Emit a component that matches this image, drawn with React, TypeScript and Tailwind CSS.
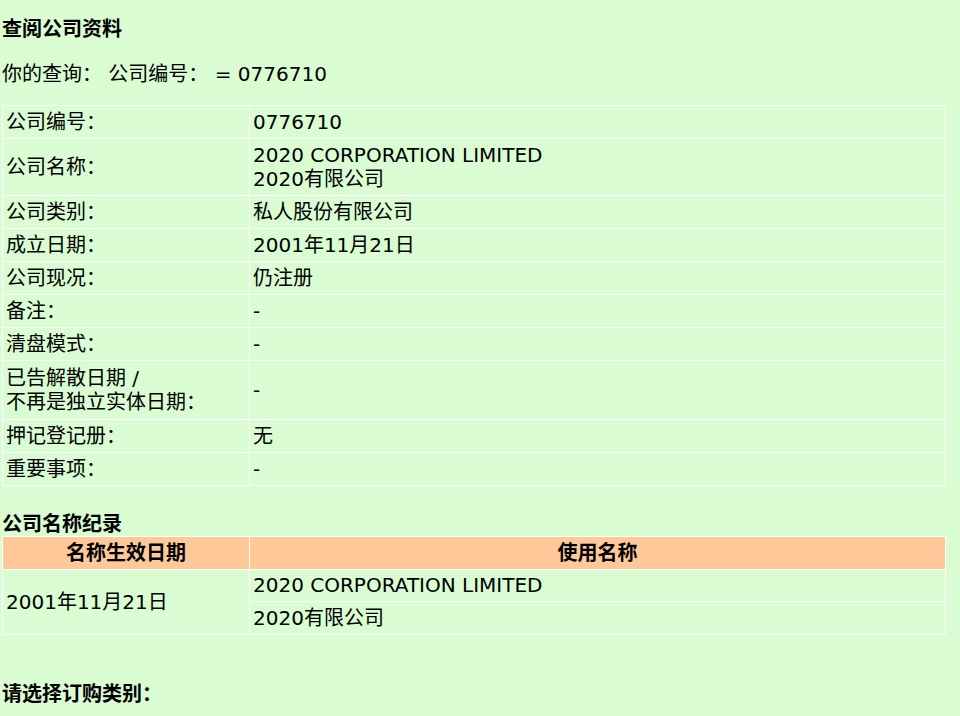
const rows: { label: React.ReactNode; value: React.ReactNode; tall?: boolean }[] = [
  { label: "公司编号：", value: "0776710" },
  {
    label: "公司名称：",
    value: (
      <>
        2020 CORPORATION LIMITED
        <br />
        2020有限公司
      </>
    ),
  },
  { label: "公司类别：", value: "私人股份有限公司" },
  { label: "成立日期：", value: "2001年11月21日" },
  { label: "公司现况：", value: "仍注册" },
  { label: "备注：", value: "-" },
  { label: "清盘模式：", value: "-" },
  {
    label: (
      <>
        已告解散日期 /
        <br />
        不再是独立实体日期：
      </>
    ),
    value: "-",
    tall: true,
  },
  { label: "押记登记册：", value: "无" },
  { label: "重要事项：", value: "-" },
];

const cell = "border border-white pl-[3px] pr-[4px] py-[4px] align-middle text-left";

export default function App() {
  return (
    <main className="min-h-[716px] bg-[#d9fcd2] px-[2px] text-[20px] leading-[24px] text-black font-['DejaVu_Sans','Noto_Sans_CJK_SC',sans-serif]">
      <h1 className="pt-[17px] font-bold">查阅公司资料</h1>
      <p className="mt-[21px]">你的查询： 公司编号： = 0776710</p>

      <table className="mt-[19px] w-[944px] border-collapse table-fixed">
        <colgroup>
          <col className="w-[247px]" />
          <col />
        </colgroup>
        <tbody>
          {rows.map((r, i) => (
            <tr key={i}>
              <td className={r.tall ? cell + " py-[5px]" : cell}>{r.label}</td>
              <td className={r.tall ? cell + " py-[5px]" : cell}>{r.value}</td>
            </tr>
          ))}
        </tbody>
      </table>

      <h2 className="mt-[26px] font-bold">公司名称纪录</h2>
      <table className="w-[944px] border-collapse table-fixed">
        <colgroup>
          <col className="w-[247px]" />
          <col />
        </colgroup>
        <thead>
          <tr className="bg-[#ffc898]">
            <th className="border border-white px-[4px] py-[4px] text-center font-bold">名称生效日期</th>
            <th className="border border-white px-[4px] py-[4px] text-center font-bold">使用名称</th>
          </tr>
        </thead>
        <tbody>
          <tr>
            <td rowSpan={2} className={cell}>
              2001年11月21日
            </td>
            <td className="border border-white pl-[3px] pr-[4px] pt-[3px] pb-[4px] text-left">
              2020 CORPORATION LIMITED
            </td>
          </tr>
          <tr>
            <td className={cell}>2020有限公司</td>
          </tr>
        </tbody>
      </table>

      <h2 className="mt-[47px] font-bold">请选择订购类别：</h2>
    </main>
  );
}
